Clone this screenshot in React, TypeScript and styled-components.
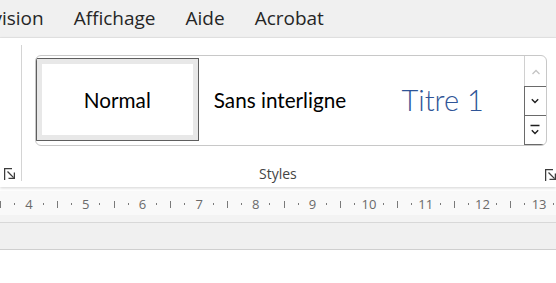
import React from 'react';
import styled, { createGlobalStyle } from 'styled-components';

const GlobalStyle = createGlobalStyle`
  html, body { margin: 0; padding: 0; background: #ffffff; }
  body { width: 556px; height: 283px; overflow: hidden; font-family: "Open Sans", "Noto Sans", sans-serif; }
`;

const Page = styled.div`
  width: 556px;
  height: 283px;
  overflow: hidden;
  display: flex;
  flex-direction: column;
  background: #ffffff;
`;

const MenuBar = styled.nav`
  flex: 0 0 38px;
  background: #f0f0f0;
  border-bottom: 1px solid #e6e6e6;
  display: flex;
  align-items: center;
  gap: 30px;
  overflow: hidden;
  padding-bottom: 2px;
  box-sizing: border-box;
`;

const MenuItem = styled.span<{ $offset?: number }>`
  flex: 0 0 auto;
  font-family: "Open Sans", "Noto Sans", sans-serif;
  font-size: 19px;
  color: #262626;
  white-space: nowrap;
  margin-left: ${(p) => (p.$offset ? `${p.$offset}px` : '0')};
`;

const Ribbon = styled.section`
  flex: 0 0 149px;
  background: #ffffff;
  display: flex;
  position: relative;
  z-index: 1;
  box-shadow: 0 1px 3px rgba(0, 0, 0, 0.18);
`;

const LeftGroup = styled.div`
  flex: 0 0 21px;
  display: flex;
  flex-direction: column;
  justify-content: flex-end;
  padding: 0 0 7px 4px;
  box-sizing: border-box;
`;

const Separator = styled.div`
  flex: 0 0 1px;
  background: #d4d4d4;
  margin: 7px 0 6px;
`;

const StylesGroup = styled.div`
  flex: 1 1 auto;
  display: flex;
  flex-direction: column;
  padding: 17px 9px 0 13px;
  box-sizing: border-box;
`;

const Gallery = styled.div`
  height: 91px;
  width: 512px;
  box-sizing: border-box;
  border: 1px solid #c8c8c8;
  border-radius: 6px;
  display: flex;
  overflow: hidden;
`;

const Items = styled.div`
  flex: 1 1 auto;
  display: flex;
  align-items: flex-start;
  padding-top: 2px;
`;

const StyleItem = styled.div<{ $selected?: boolean }>`
  flex: 0 0 162.67px;
  height: 83px;
  box-sizing: border-box;
  display: flex;
  align-items: center;
  justify-content: center;
  border: ${(p) => (p.$selected ? '1px solid #5e5e5e' : '1px solid transparent')};
  box-shadow: ${(p) => (p.$selected ? 'inset 0 0 0 5px #e8e8e8' : 'none')};
`;

const StyleLabel = styled.span<{ $heading?: boolean }>`
  font-family: "Lato", "Open Sans", sans-serif;
  font-size: ${(p) => (p.$heading ? '29px' : '20.7px')};
  font-weight: ${(p) => (p.$heading ? 300 : 400)};
  color: ${(p) => (p.$heading ? '#2f5597' : '#000000')};
  white-space: nowrap;
  margin-top: ${(p) => (p.$heading ? '0' : '1px')};
`;

const ScrollCol = styled.div`
  flex: 0 0 22px;
  display: flex;
  flex-direction: column;
  border-left: 1px solid #d0d0d0;
`;

const ScrollBtn = styled.div<{ $active?: boolean; $h: number }>`
  flex: 0 0 ${(p) => p.$h}px;
  box-sizing: border-box;
  display: flex;
  align-items: center;
  justify-content: center;
  border: ${(p) => (p.$active ? '1px solid #6a6a6a' : 'none')};
  margin-left: ${(p) => (p.$active ? '-1px' : '0')};
  margin-top: ${(p) => (p.$active ? '-1px' : '0')};
`;

const GroupFooter = styled.div`
  flex: 1 1 auto;
  display: flex;
  align-items: flex-end;
  justify-content: space-between;
  padding: 0 0 6px 0;
  margin-right: -9px;
`;

const GroupLabel = styled.span`
  font-family: "Open Sans", "Noto Sans", sans-serif;
  font-size: 14px;
  color: #444444;
  margin: 0 0 -2px 224px;
`;

const LauncherWrap = styled.span`
  display: flex;
  width: 11px;
  height: 12px;
`;

const Ruler = styled.div`
  flex: 0 0 24px;
  margin-top: 4px;
  background: #f9f9f9;
  display: flex;
  overflow: hidden;
`;

const RulerTrack = styled.div`
  display: flex;
  margin-left: -6.4px;
  padding-top: 2px;
`;

const RulerCm = styled.div`
  flex: 0 0 56.69px;
  display: grid;
  grid-template-columns: repeat(4, 1fr);
  align-items: center;
  justify-items: center;
`;

const Tick = styled.span<{ $big?: boolean }>`
  width: 1px;
  height: ${(p) => (p.$big ? '7px' : '2px')};
  background: #7a7a7a;
`;

const RulerNum = styled.span`
  font-family: "Open Sans", "Noto Sans", sans-serif;
  font-size: 13px;
  color: #6a6a6a;
  line-height: 1;
`;

const Strip = styled.div`
  flex: 0 0 7px;
  background: #f3f3f3;
  border-bottom: 1px solid #d8d8d8;
`;

const GrayArea = styled.div`
  flex: 0 0 26px;
  background: #f0f0f0;
  border-bottom: 1px solid #cfcfcf;
`;

const Doc = styled.div`
  flex: 1 1 auto;
  background: #ffffff;
`;

const Launcher = () => (
  <LauncherWrap>
    <svg width="11" height="12" viewBox="0 0 11 12" fill="none" stroke="#3c3c3c" strokeWidth="1.3">
      <path d="M0.6 12 V0.6 H8" />
      <path d="M3.5 3.5 L9.6 9.6" />
      <path d="M4.5 10.4 H10.4 V4.5" />
    </svg>
  </LauncherWrap>
);

const ChevronUp = () => (
  <svg width="10" height="6" viewBox="0 0 10 6" fill="none" stroke="#c4c4c4" strokeWidth="1.3">
    <path d="M1.5 5 L5 1.5 L8.5 5" />
  </svg>
);

const ChevronDown = () => (
  <svg width="10" height="6" viewBox="0 0 10 6" fill="none" stroke="#1e1e1e" strokeWidth="1.4">
    <path d="M1.8 1.2 L5 4.4 L8.2 1.2" />
  </svg>
);

const More = () => (
  <svg width="10" height="12" viewBox="0 0 10 12" fill="none" stroke="#1e1e1e" strokeWidth="1.4">
    <path d="M0.5 1.5 H9.5" />
    <path d="M1.8 6.2 L5 9.4 L8.2 6.2" />
  </svg>
);

const cms = [4, 5, 6, 7, 8, 9, 10, 11, 12, 13];

export default function App() {
  return (
    <>
      <GlobalStyle />
      <Page>
        <MenuBar>
          <MenuItem $offset={-30}>Révision</MenuItem>
          <MenuItem>Affichage</MenuItem>
          <MenuItem>Aide</MenuItem>
          <MenuItem>Acrobat</MenuItem>
        </MenuBar>
        <Ribbon>
          <LeftGroup>
            <Launcher />
          </LeftGroup>
          <Separator />
          <StylesGroup>
            <Gallery>
              <Items>
                <StyleItem $selected>
                  <StyleLabel>Normal</StyleLabel>
                </StyleItem>
                <StyleItem>
                  <StyleLabel>Sans interligne</StyleLabel>
                </StyleItem>
                <StyleItem>
                  <StyleLabel $heading>Titre 1</StyleLabel>
                </StyleItem>
              </Items>
              <ScrollCol>
                <ScrollBtn $h={31}>
                  <ChevronUp />
                </ScrollBtn>
                <ScrollBtn $active $h={30}>
                  <ChevronDown />
                </ScrollBtn>
                <ScrollBtn $active $h={30}>
                  <More />
                </ScrollBtn>
              </ScrollCol>
            </Gallery>
            <GroupFooter>
              <GroupLabel>Styles</GroupLabel>
              <Launcher />
            </GroupFooter>
          </StylesGroup>
        </Ribbon>
        <Ruler>
          <RulerTrack>
            {cms.map((n) => (
              <RulerCm key={n}>
                <Tick $big />
                <Tick />
                <RulerNum>{n}</RulerNum>
                <Tick />
              </RulerCm>
            ))}
          </RulerTrack>
        </Ruler>
        <Strip />
        <GrayArea />
        <Doc />
      </Page>
    </>
  );
}
